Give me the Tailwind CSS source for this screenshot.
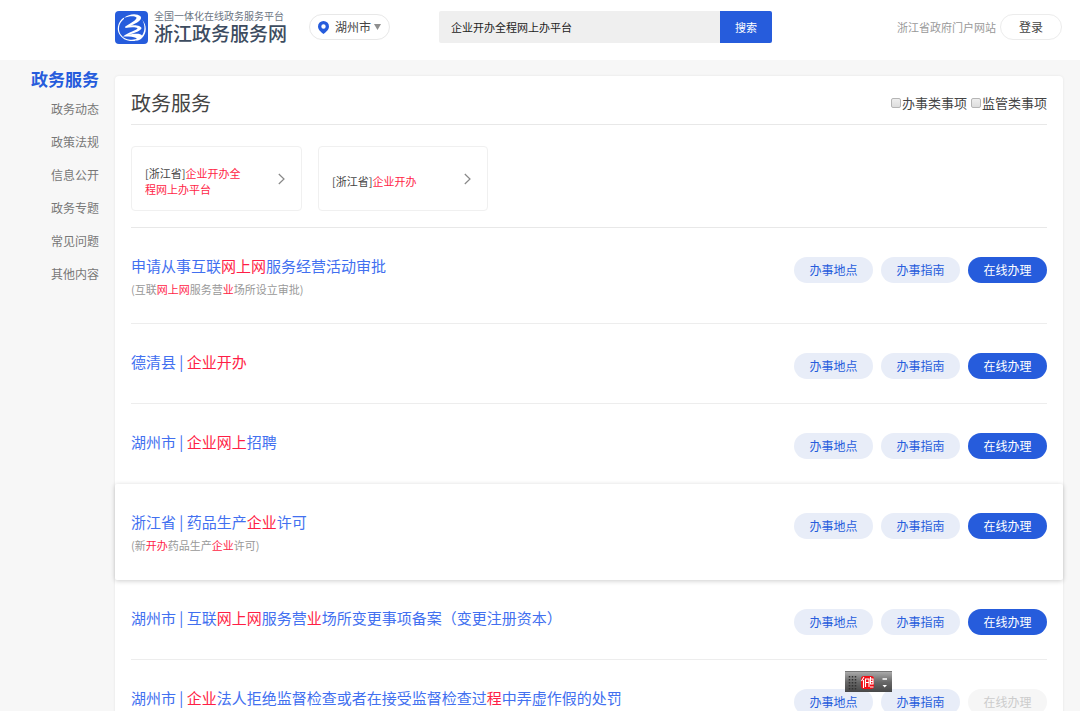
<!DOCTYPE html>
<html lang="zh-CN">
<head>
<meta charset="utf-8">
<meta name="viewport" content="width=device-width, initial-scale=1">
<title>浙江政务服务网</title>
<script src="https://cdn.jsdelivr.net/npm/@tailwindcss/browser@4"></script>
</head>
<body class="min-h-screen bg-[#f7f7f7] font-['Noto_Sans_CJK_SC',sans-serif] text-xs text-[#444]">
<header class="flex h-15 items-center bg-white pl-[115px] pr-[18px] pb-1.5">
  <a href="#" class="flex shrink-0 items-center gap-1.5">
    <svg class="size-[33px]" viewBox="0 0 33 33" fill="none" aria-hidden="true">
      <rect width="33" height="33" rx="4" fill="#265cdc"/>
      <path d="M8.500 7.500C3 12 1.800 19 5.500 24C10 30.500 20 31 25.500 26.500" stroke="#fff" stroke-width="1.200" stroke-linecap="round"/>
      <path d="M9 6.800C14 2.500 22 2 25.500 5.200C28 8.500 22 12 15.500 14.600C20 13.500 26 14.500 26.500 17C26.500 19.500 20 22 12.500 24C19 22.500 25.500 22 27 24.500C30 20.500 30.500 14 27 8.500C32 14 32 22 27 27C25 29 22.500 29.700 21 29.500C24 27.500 20 25.200 8 25.500C13 21.500 22.500 19 22.500 17.300C21 15.800 15 16 10.500 17L10 15.800C15 12.500 22 9 21.500 6.500C19.500 4.500 14 4.800 9 6.800Z" fill="#fff"/>
    </svg>
    <span class="flex flex-col">
      <span class="text-[10px] leading-3 text-[#6b7482]">全国一体化在线政务服务平台</span>
      <span class="text-[19px] leading-[22px] font-medium text-[#3d4c60]">浙江政务服务网</span>
    </span>
  </a>
  <button type="button" class="ml-[22px] flex h-[26px] w-[81px] shrink-0 items-center rounded-full border border-[#e8e8e8] px-2">
    <svg class="h-[13px] w-[11px]" viewBox="0 0 11 13" aria-hidden="true"><path fill="#265cdc" fill-rule="evenodd" d="M5.500 0A5.500 5.500 0 0 1 11 5.500C11 8.500 8 11 5.500 13C3 11 0 8.500 0 5.500A5.500 5.500 0 0 1 5.500 0ZM5.500 3.300A2.200 2.200 0 1 0 5.500 7.700A2.200 2.200 0 1 0 5.500 3.300Z"/></svg>
    <span class="ml-1.5">湖州市</span>
    <svg class="ml-auto h-1.5 w-[7px]" viewBox="0 0 7 6" aria-hidden="true"><path fill="#8f8f8f" d="M0 0H7L3.500 6Z"/></svg>
  </button>
  <form class="ml-[49px] flex h-8 w-[333px]">
    <input type="text" aria-label="搜索内容" value="企业开办全程网上办平台" class="min-w-0 flex-1 rounded-l-xs bg-[#efefef] px-3 text-[11px] text-[#222]">
    <button type="button" class="w-[52px] rounded-r-xs bg-[#265cdc] text-[11px] text-white">搜索</button>
  </form>
  <a href="#" class="ml-auto shrink-0 text-[11px] text-[#999]">浙江省政府门户网站</a>
  <button type="button" class="ml-1 h-[26px] w-[62px] shrink-0 rounded-full border border-[#ececec] text-xs">登录</button>
</header>

<div class="flex">
  <nav class="w-[115px] shrink-0 pt-2 pr-4 text-right text-[#777]">
    <h2 class="mb-[9px] text-[17px] leading-[22px] font-bold text-[#265cdc]">政务服务</h2>
    <ul class="flex flex-col gap-[13px] leading-5">
      <li><a href="#">政务动态</a></li>
      <li><a href="#">政策法规</a></li>
      <li><a href="#">信息公开</a></li>
      <li><a href="#">政务专题</a></li>
      <li><a href="#">常见问题</a></li>
      <li><a href="#">其他内容</a></li>
    </ul>
  </nav>

  <main class="mt-4 mr-[17px] flex-1 rounded-t bg-white shadow-[0_0_3px_rgba(0,0,0,0.08)]">
    <div class="mx-4 flex h-[49px] items-center justify-between border-b border-[#e8e8e8] pt-1.5">
      <h1 class="text-xl leading-7">政务服务</h1>
      <div class="flex gap-1 text-[13px]">
        <label class="flex items-center"><input type="checkbox" class="mr-px size-2.5 appearance-none rounded-xs border border-[#b5b5b5] bg-linear-to-b from-[#eee] to-[#ddd] checked:bg-[#265cdc]">办事类事项</label>
        <label class="flex items-center"><input type="checkbox" class="mr-px size-2.5 appearance-none rounded-xs border border-[#b5b5b5] bg-linear-to-b from-[#eee] to-[#ddd] checked:bg-[#265cdc]">监管类事项</label>
      </div>
    </div>
    <div class="mx-4 flex gap-4 border-b border-[#e8e8e8] pt-[21px] pb-4 text-[11px] leading-4">
      <a href="#" class="flex h-[65px] w-[171px] items-center justify-between rounded border border-[#f0f0f0] pr-4 pl-[13px]">
        <span class="w-24 pt-1">[浙江省]<em class="text-[#ff1e46] not-italic">企业开办全程网上办平台</em></span>
        <svg class="h-3 w-[7px]" viewBox="0 0 7 12" fill="none" stroke="#888" stroke-width="1.200" aria-hidden="true"><path d="M.8 1L6 6L.8 11"/></svg>
      </a>
      <a href="#" class="flex h-[65px] w-[170px] items-center justify-between rounded border border-[#f0f0f0] pr-4 pl-[13px]">
        <span class="w-24 pt-1">[浙江省]<em class="text-[#ff1e46] not-italic">企业开办</em></span>
        <svg class="h-3 w-[7px]" viewBox="0 0 7 12" fill="none" stroke="#888" stroke-width="1.200" aria-hidden="true"><path d="M.8 1L6 6L.8 11"/></svg>
      </a>
    </div>

    <article class="mx-4 flex items-start justify-between border-b border-[#ededed] pt-[29px] pb-6">
      <div>
        <h3 class="text-[15px] leading-[18px]"><a href="#" class="text-[#4270f0]">申请从事互联<em class="text-[#ff1e46] not-italic">网上网</em>服务经营活动审批</a></h3>
        <p class="mt-1 text-[11px] leading-5 text-[#999]">(互联<em class="text-[#ff1e46] not-italic">网上网</em>服务营<em class="text-[#ff1e46] not-italic">业</em>场所设立审批)</p>
      </div>
      <div class="flex shrink-0 gap-2 text-[#265cdc]">
        <button type="button" class="h-[26px] w-[79px] rounded-full bg-[#e8edf8]">办事地点</button>
        <button type="button" class="h-[26px] w-[79px] rounded-full bg-[#e8edf8]">办事指南</button>
        <button type="button" class="h-[26px] w-[79px] rounded-full bg-[#265cdc] text-white">在线办理</button>
      </div>
    </article>
    <article class="mx-4 flex items-start justify-between border-b border-[#ededed] pt-[29px] pb-6">
      <h3 class="text-[15px] leading-[18px]"><a href="#" class="text-[#4270f0]">德清县 | <em class="text-[#ff1e46] not-italic">企业开办</em></a></h3>
      <div class="flex shrink-0 gap-2 text-[#265cdc]">
        <button type="button" class="h-[26px] w-[79px] rounded-full bg-[#e8edf8]">办事地点</button>
        <button type="button" class="h-[26px] w-[79px] rounded-full bg-[#e8edf8]">办事指南</button>
        <button type="button" class="h-[26px] w-[79px] rounded-full bg-[#265cdc] text-white">在线办理</button>
      </div>
    </article>
    <article class="mx-4 flex items-start justify-between border-b border-transparent pt-[29px] pb-6">
      <h3 class="text-[15px] leading-[18px]"><a href="#" class="text-[#4270f0]">湖州市 | <em class="text-[#ff1e46] not-italic">企业网上</em>招聘</a></h3>
      <div class="flex shrink-0 gap-2 text-[#265cdc]">
        <button type="button" class="h-[26px] w-[79px] rounded-full bg-[#e8edf8]">办事地点</button>
        <button type="button" class="h-[26px] w-[79px] rounded-full bg-[#e8edf8]">办事指南</button>
        <button type="button" class="h-[26px] w-[79px] rounded-full bg-[#265cdc] text-white">在线办理</button>
      </div>
    </article>
    <article class="flex items-start justify-between rounded-xs border-b border-transparent bg-white px-4 pt-[29px] pb-6 shadow-[0_1px_5px_rgba(0,0,0,0.2)]">
      <div>
        <h3 class="text-[15px] leading-[18px]"><a href="#" class="text-[#4270f0]">浙江省 | 药品生产<em class="text-[#ff1e46] not-italic">企业</em>许可</a></h3>
        <p class="mt-1 text-[11px] leading-5 text-[#999]">(新<em class="text-[#ff1e46] not-italic">开办</em>药品生产<em class="text-[#ff1e46] not-italic">企业</em>许可)</p>
      </div>
      <div class="flex shrink-0 gap-2 text-[#265cdc]">
        <button type="button" class="h-[26px] w-[79px] rounded-full bg-[#e8edf8]">办事地点</button>
        <button type="button" class="h-[26px] w-[79px] rounded-full bg-[#e8edf8]">办事指南</button>
        <button type="button" class="h-[26px] w-[79px] rounded-full bg-[#265cdc] text-white">在线办理</button>
      </div>
    </article>
    <article class="mx-4 flex items-start justify-between border-b border-[#ededed] pt-[29px] pb-6">
      <h3 class="text-[15px] leading-[18px]"><a href="#" class="text-[#4270f0]">湖州市 | 互联<em class="text-[#ff1e46] not-italic">网上网</em>服务营<em class="text-[#ff1e46] not-italic">业</em>场所变更事项备案（变更注册资本）</a></h3>
      <div class="flex shrink-0 gap-2 text-[#265cdc]">
        <button type="button" class="h-[26px] w-[79px] rounded-full bg-[#e8edf8]">办事地点</button>
        <button type="button" class="h-[26px] w-[79px] rounded-full bg-[#e8edf8]">办事指南</button>
        <button type="button" class="h-[26px] w-[79px] rounded-full bg-[#265cdc] text-white">在线办理</button>
      </div>
    </article>
    <article class="mx-4 flex items-start justify-between border-b border-[#ededed] pt-[29px] pb-6">
      <h3 class="text-[15px] leading-[18px]"><a href="#" class="text-[#4270f0]">湖州市 | <em class="text-[#ff1e46] not-italic">企业</em>法人拒绝监督检查或者在接受监督检查过<em class="text-[#ff1e46] not-italic">程</em>中弄虚作假的处罚</a></h3>
      <div class="flex shrink-0 gap-2 text-[#265cdc]">
        <button type="button" class="h-[26px] w-[79px] rounded-full bg-[#e8edf8]">办事地点</button>
        <button type="button" class="h-[26px] w-[79px] rounded-full bg-[#e8edf8]">办事指南</button>
        <button type="button" disabled class="h-[26px] w-[79px] rounded-full bg-[#f6f6f6] text-[#ccc]">在线办理</button>
      </div>
    </article>
  </main>
</div>

<!-- floating input-method bar -->
<div class="fixed right-[188px] bottom-[19px] h-[21px] w-[47px] border-t border-[#777] bg-linear-to-b from-[#aaa] via-[#686868] to-[#484848]">
  <svg class="h-5 w-[47px]" viewBox="0 0 47 20" fill="none" aria-hidden="true">
    <path d="M4.500 4V18M7.500 4V18M10.500 4V18" stroke="#333" stroke-width="1.500" stroke-dasharray="1.500 1.500"/>
    <rect x="16" y="4" width="13" height="13" rx="3" fill="#f20d15"/>
    <path d="M19 5L16.500 9M18.500 8V16M20.500 15V7H24V15M20.500 10.500H24M25.500 5V12H28V7H25.500M25.500 9.500H28M25 15H28.500" stroke="#fff" stroke-width="1.100"/>
    <path d="M37.500 7H42" stroke="#fff" stroke-width="1.500"/>
    <path d="M37.500 13H42L39.700 15.500Z" fill="#fff"/>
  </svg>
</div>
</body>
</html>
